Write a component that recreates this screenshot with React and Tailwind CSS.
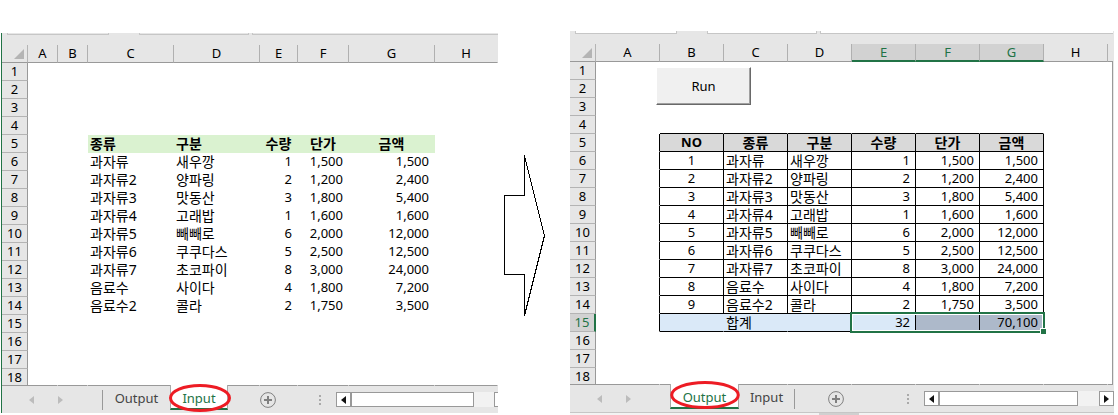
import clsx from 'clsx'

const productos = [
  ['과자류', '새우깡', '1', '1,500', '1,500'],
  ['과자류2', '양파링', '2', '1,200', '2,400'],
  ['과자류3', '맛동산', '3', '1,800', '5,400'],
  ['과자류4', '고래밥', '1', '1,600', '1,600'],
  ['과자류5', '빼빼로', '6', '2,000', '12,000'],
  ['과자류6', '쿠쿠다스', '5', '2,500', '12,500'],
  ['과자류7', '초코파이', '8', '3,000', '24,000'],
  ['음료수', '사이다', '4', '1,800', '7,200'],
  ['음료수2', '콜라', '2', '1,750', '3,500'],
]

const titles = ['종류', '구분', '수량', '단가', '금액']
const letters = ['A', 'B', 'C', 'D', 'E', 'F', 'G', 'H']
const rowNumbers = Array.from({ length: 18 }, (_, i) => i + 1)

// Input sheet: C..G hold the data, header in row 5
function inputCell(row, letter) {
  const col = letters.indexOf(letter) - 2
  if (col < 0 || col > 4) return null
  if (row === 5) {
    return {
      text: titles[col],
      className: clsx('bg-[#daf2d0] text-sm leading-[17px] font-bold', col < 2 ? 'pl-0.5' : 'text-center'),
    }
  }
  if (row < 6 || row > 14) return null
  return {
    text: productos[row - 6][col],
    className: col < 2 ? 'pl-0.5 text-sm leading-[17px]' : 'pr-[5px] text-right',
  }
}

// Output sheet: B..G with borders, total in row 15
function outputCell(row, letter) {
  const col = letters.indexOf(letter) - 1
  if (letter === 'A') return row >= 5 && row <= 15 ? { right: true } : null
  if (col > 5) return null
  if (row === 4) return { bottom: true }
  if (row === 5) {
    return {
      text: ['NO', ...titles][col],
      right: true,
      bottom: true,
      className: clsx('bg-[#d9d9d9] text-center font-bold', col > 0 && 'text-sm leading-[17px]'),
    }
  }
  if (row >= 6 && row <= 14) {
    return {
      text: [String(row - 5), ...productos[row - 6]][col],
      right: true,
      bottom: true,
      className: clsx(
        col === 0 && 'text-center',
        (col === 1 || col === 2) && 'pl-0.5 text-sm leading-[17px]',
        col > 2 && 'pr-[5px] text-right'
      ),
    }
  }
  if (row === 15) {
    return {
      text: ['', '합계', '', '32', '', '70,100'][col],
      selection: col === 3,
      right: col > 1,
      bottom: true,
      className: clsx(
        col < 4 ? 'bg-[#dae9f8]' : 'bg-[#adb9ca]',
        col === 1 && 'pl-0.5 text-sm leading-[17px]',
        col > 2 && 'pr-[5px] text-right'
      ),
    }
  }
  return null
}

function Selection() {
  return (
    <div className="pointer-events-none absolute -top-0.5 -left-0.5 h-[21px] w-[195px] border-2 border-[#217346]">
      <div className="h-full border border-white" />
      <div className="absolute -right-1 -bottom-1 size-[7px] border border-white bg-[#217346]" />
    </div>
  )
}

function Sheet({ widths, cell, edge, selectedCols = [], selectedRow }) {
  return (
    <table className="w-full table-fixed border-separate border-spacing-0 bg-white">
      <colgroup>
        {widths.map((w, i) => (
          <col key={i} style={w ? { width: w } : undefined} />
        ))}
        {edge && <col style={{ width: 5 }} />}
      </colgroup>
      <thead>
        <tr className="h-[18px]">
          <td className="border-r border-b border-r-[#b4b4b4] border-b-[#999] bg-[#e6e6e6] p-0">
            <svg className="mr-[3px] ml-auto block" width="10" height="10" viewBox="0 0 10 10">
              <path d="M10 0V10H0Z" fill="#b4b4b4" />
            </svg>
          </td>
          {letters.map(l => {
            const selected = selectedCols.includes(l)
            return (
              <th
                key={l}
                scope="col"
                className={clsx(
                  'border-r p-0 text-center font-normal',
                  selected
                    ? 'border-b-2 border-b-[#217346] bg-[#d2d2d2] leading-4 text-[#217346]'
                    : 'border-b border-b-[#999] bg-[#e6e6e6]',
                  l === 'H' && !edge ? 'border-r-transparent' : 'border-r-[#b0b0b0]'
                )}
              >
                {l}
              </th>
            )
          })}
          {edge && <td className="border-b border-[#999] bg-[#e6e6e6] p-0" />}
        </tr>
      </thead>
      <tbody>
        {rowNumbers.map(n => (
          <tr key={n} className={n === 18 ? 'h-[17px]' : 'h-[18px]'}>
            <th
              scope="row"
              className={clsx(
                'border-b p-0 text-center font-normal',
                n === 18 ? 'border-b-[#999] leading-4' : 'border-b-[#b4b4b4] leading-[17px]',
                n === selectedRow
                  ? 'border-r-2 border-r-[#217346] bg-[#d2d2d2] text-[#217346]'
                  : 'border-r border-r-[#999] bg-[#e6e6e6]'
              )}
            >
              {n}
            </th>
            {letters.map(l => {
              const c = cell(n, l)
              return (
                <td
                  key={l}
                  className={clsx(
                    'relative border-r border-b p-0 whitespace-nowrap',
                    c?.right ? 'border-r-black' : 'border-r-transparent',
                    c?.bottom ? 'border-b-black' : n === 18 ? 'border-b-[#999]' : 'border-b-transparent',
                    c?.selection && 'z-10',
                    c?.className
                  )}
                >
                  {c?.text}
                  {c?.selection && <Selection />}
                </td>
              )
            })}
            {edge && (
              <td className={clsx('border-r border-r-[#999] p-0', n === 18 && 'border-b border-b-[#999]')} />
            )}
          </tr>
        ))}
      </tbody>
    </table>
  )
}

function ScrollButton({ direction }) {
  return (
    <button
      aria-label={direction}
      className="flex size-[15px] shrink-0 items-center justify-center border border-[#999] bg-white"
    >
      <svg width="5" height="8" viewBox="0 0 5 8">
        <path d={direction === 'left' ? 'M5 0V8L0 4Z' : 'M0 0V8L5 4Z'} fill="#111" />
      </svg>
    </button>
  )
}

function Tab({ name, active, className, markClass }) {
  return (
    <button
      className={clsx(
        'relative h-full shrink-0 pb-0.5 text-center',
        active ? 'text-[#217346]' : 'text-[#444]',
        className
      )}
    >
      {active && (
        <span className="absolute inset-x-0 -top-px bottom-[3px] border-x border-b-2 border-x-[#aaa] border-b-[#217346] bg-white" />
      )}
      <span className="relative">{name}</span>
      {active && (
        <svg
          className={clsx('absolute h-7 overflow-visible', markClass)}
          viewBox="0 0 62 28"
          preserveAspectRatio="none"
        >
          <ellipse
            cx="31"
            cy="14"
            rx="29.500"
            ry="12.500"
            fill="none"
            stroke="#ed1c24"
            strokeWidth="3"
            vectorEffect="non-scaling-stroke"
          />
        </svg>
      )}
    </button>
  )
}

function TabBar({ children, scroll, navWidth, dotsGap }) {
  return (
    <div className="flex h-[27px] items-center bg-[#e6e6e6]">
      <div className={clsx('flex h-5 shrink-0 items-center gap-6 pl-[27px]', navWidth)}>
        <svg width="5" height="8" viewBox="0 0 5 8">
          <path d="M5 0V8L0 4Z" fill="#bcbcbc" />
        </svg>
        <svg width="5" height="8" viewBox="0 0 5 8">
          <path d="M0 0V8L5 4Z" fill="#bcbcbc" />
        </svg>
      </div>
      {children}
      <button aria-label="add sheet" className="shrink-0">
        <svg width="16" height="16" viewBox="0 0 16 16" fill="none" stroke="#808080">
          <circle cx="8" cy="8" r="7.4" />
          <path d="M8 4V12M4 8H12" strokeWidth="2" />
        </svg>
      </button>
      <svg className={clsx('shrink-0', dotsGap)} width="2" height="10" viewBox="0 0 2 10" fill="#aaa">
        <path d="M0 0H2V2H0ZM0 4H2V6H0ZM0 8H2V10H0Z" />
      </svg>
      {scroll}
    </div>
  )
}

export default function App() {
  return (
    <main className="flex items-start bg-white pr-1 pl-px font-['Noto_Sans','Noto_Sans_CJK_KR',sans-serif] text-[13px] leading-[17px] text-black">
      {/* Input */}
      <section className="mt-[33px] min-w-0 flex-[496] overflow-hidden border-l border-[#217346] bg-[#e6e6e6]">
        <div className="flex h-3 items-start pl-[5px]">
          <div className="h-0.5 w-[102px] border-x border-b border-[#c6c6c6]" />
          <div className="ml-[30px] h-0.5 w-[110px] border-x border-b border-[#c6c6c6]" />
          <div className="ml-[3px] h-0.5 flex-1 border-b border-l border-[#c6c6c6]" />
        </div>
        <Sheet widths={[26, 30, 30, 86, 86, 38, 51, 86, null]} cell={inputCell} />
        <TabBar
          navWidth="w-[101px] border-r border-[#999]"
          dotsGap="ml-[43px]"
          scroll={
            <div className="ml-[15px] flex min-w-0 flex-1 bg-[#f2f2f2]">
              <ScrollButton direction="left" />
              <div className="h-[15px] flex-1 border border-[#999] bg-white" />
              <div className="ml-5 h-[15px] w-1 border-y border-l border-[#999] bg-white" />
            </div>
          }
        >
          <Tab name="Output" className="w-[67px]" />
          <Tab name="Input" active className="mr-[32px] w-[58px]" markClass="-top-0.5 -left-px w-[62px]" />
        </TabBar>
      </section>

      <svg
        className="mt-[154px] w-[72px] shrink-0"
        height="164"
        viewBox="0 0 72 164"
        fill="none"
        stroke="#000"
        shapeRendering="crispEdges"
      >
        <path d="M6.500 41.500H26.500V1.500L46.500 81.500L26.500 161.500V120.500H6.500Z" />
      </svg>

      {/* Output */}
      <section className="mt-[31px] min-w-0 flex-[544]">
        <div className="bg-[#e6e6e6] pr-px">
          <div className="flex h-[13px] items-start pl-[5px]">
            <div className="h-[3px] w-[102px] border-x border-b border-[#c6c6c6] bg-white" />
            <div className="ml-[30px] h-[3px] w-[110px] border-x border-b border-[#c6c6c6] bg-white" />
            <div className="ml-[3px] h-[3px] flex-1 border-b border-l border-[#c6c6c6] bg-white" />
          </div>
          <div className="relative">
            <Sheet
              widths={[26, 64, 64, 64, 64, 64, 64, 64, null]}
              cell={outputCell}
              edge
              selectedCols={['E', 'F', 'G']}
              selectedRow={15}
            />
            <button className="absolute top-[23px] left-[86px] z-10 h-[38px] w-[95px] border border-t-white border-r-[#696969] border-b-[#696969] border-l-white bg-[#f0f0f0] shadow-[inset_-1px_-1px_0_#a0a0a0]">
              Run
            </button>
          </div>
        </div>
        <TabBar
          navWidth="w-[100px]"
          dotsGap="ml-[63px]"
          scroll={
            <div className="ml-[15px] flex min-w-0 flex-1 bg-[#f2f2f2]">
              <ScrollButton direction="left" />
              <div className="mr-[21px] h-[15px] flex-1 border border-[#999] bg-white" />
              <ScrollButton direction="right" />
            </div>
          }
        >
          <Tab name="Output" active className="w-[69px]" markClass="-top-1 left-0 w-[70px]" />
          <Tab name="Input" className="w-[55px]" />
          <div className="mr-[33px] h-5 w-px shrink-0 bg-[#999]" />
        </TabBar>
        <div className="flex h-[3px] border-t border-[#c6c6c6] bg-[#f3f3f3]">
          <div className="ml-[249px] w-10 bg-[#d0d0d0]" />
        </div>
      </section>
    </main>
  )
}
